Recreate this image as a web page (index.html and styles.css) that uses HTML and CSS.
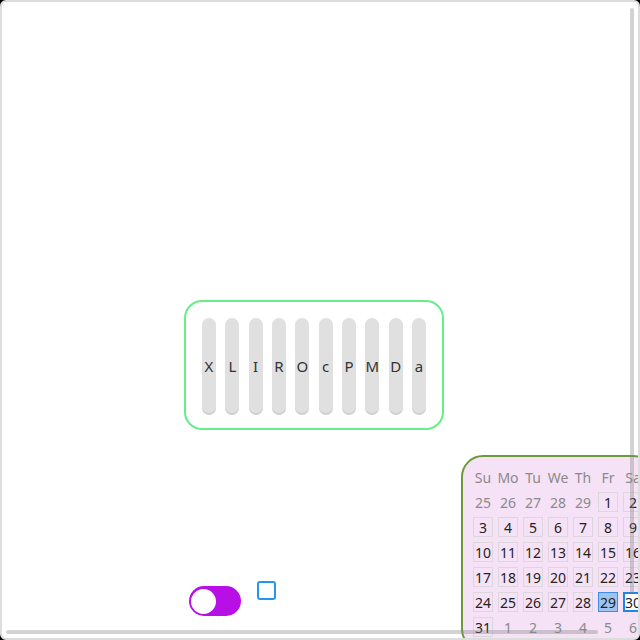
FILE: index.html
```html
<!DOCTYPE html>
<html>
<head>
<meta charset="utf-8">
<link rel="stylesheet" href="styles.css">
</head>
<body>
<div class="frame">
  <div class="canvas">
    <div class="slider-card">
      <div class="pill">X</div>
      <div class="pill">L</div>
      <div class="pill">I</div>
      <div class="pill">R</div>
      <div class="pill">O</div>
      <div class="pill">c</div>
      <div class="pill">P</div>
      <div class="pill">M</div>
      <div class="pill">D</div>
      <div class="pill">a</div>
    </div>
    <div class="bottom-row">
      <div class="toggle"><div class="knob"></div></div>
      <div class="checkbox"></div>
      <div class="calendar">
        <div class="hd">Su</div><div class="hd">Mo</div><div class="hd">Tu</div><div class="hd">We</div><div class="hd">Th</div><div class="hd">Fr</div><div class="hd">Sa</div>
        <div class="d out">25</div><div class="d out">26</div><div class="d out">27</div><div class="d out">28</div><div class="d out">29</div><div class="d in">1</div><div class="d in">2</div>
        <div class="d in">3</div><div class="d in">4</div><div class="d in">5</div><div class="d in">6</div><div class="d in">7</div><div class="d in">8</div><div class="d in">9</div>
        <div class="d in">10</div><div class="d in">11</div><div class="d in">12</div><div class="d in">13</div><div class="d in">14</div><div class="d in">15</div><div class="d in">16</div>
        <div class="d in">17</div><div class="d in">18</div><div class="d in">19</div><div class="d in">20</div><div class="d in">21</div><div class="d in">22</div><div class="d in">23</div>
        <div class="d in">24</div><div class="d in">25</div><div class="d in">26</div><div class="d in">27</div><div class="d in">28</div><div class="d in sel">29</div><div class="d in today">30</div>
        <div class="d in">31</div><div class="d out">1</div><div class="d out">2</div><div class="d out">3</div><div class="d out">4</div><div class="d out">5</div><div class="d out">6</div>
      </div>
    </div>
  </div>
  <div class="vscroll"></div>
  <div class="hscroll"></div>
</div>
</body>
</html>
```
FILE: styles.css
```css
html, body {
  margin: 0;
  padding: 0;
  background: #000;
}
.frame {
  width: 640px;
  height: 640px;
  box-sizing: border-box;
  border: 2px solid #dddddd;
  border-radius: 6px;
  background: #fff;
  overflow: hidden;
  position: relative;
  font-family: "Noto Sans", "DejaVu Sans", sans-serif;
}
.canvas {
  width: 700px;
}
.slider-card {
  margin-left: 182px;
  margin-top: 298px;
  width: 260px;
  height: 130px;
  box-sizing: border-box;
  border: 2px solid #66ee88;
  border-radius: 18px;
  padding: 16px;
  display: flex;
  justify-content: space-between;
}
.pill {
  width: 14px;
  height: 95px;
  border-radius: 7px;
  background: #e0e0e0;
  box-shadow: 0 2px 0 #d0d0d0;
  display: flex;
  align-items: center;
  justify-content: center;
  font-size: 15px;
  color: #333;
}
.bottom-row {
  display: flex;
  align-items: flex-start;
  margin-top: 25px;
}
.toggle {
  margin-left: 187px;
  margin-top: 131px;
  width: 52px;
  height: 30px;
  border-radius: 15px;
  background: #b70fe6;
  box-sizing: border-box;
  padding: 2.5px 2px;
  flex-shrink: 0;
}
.knob {
  width: 25px;
  height: 25px;
  border-radius: 50%;
  background: #fff;
}
.checkbox {
  margin-left: 16px;
  margin-top: 126px;
  width: 19px;
  height: 19px;
  box-sizing: border-box;
  border: 2px solid #2196f3;
  border-radius: 3px;
  background: #fff;
  flex-shrink: 0;
}
.calendar {
  margin-left: 185px;
  flex-shrink: 0;
  border: 2px solid #6d9b3a;
  border-radius: 22px;
  background: #f6e2f6;
  padding: 10px 10px 12px 10px;
  display: grid;
  grid-template-columns: repeat(7, 20px);
  grid-auto-rows: 20px;
  gap: 5px;
  font-size: 14px;
}
.hd, .d {
  display: flex;
  align-items: center;
  justify-content: center;
  white-space: nowrap;
  box-sizing: border-box;
}
.hd {
  color: #8a8a8a;
}
.d.out {
  color: #8a8a8a;
}
.d.in {
  color: #222;
  border: 1px solid #ddd6dd;
}
.d.sel {
  background: #a0c4f0;
  border: 1px solid #3b8ee8;
}
.d.today {
  background: #fff;
  border: 2px solid #1e88e5;
}
.vscroll {
  position: absolute;
  right: 4px;
  top: 6px;
  width: 4px;
  height: 586px;
  border-radius: 2px;
  background: rgba(128, 128, 128, 0.35);
}
.hscroll {
  position: absolute;
  left: 4px;
  bottom: 4px;
  width: 592px;
  height: 4px;
  border-radius: 2px;
  background: rgba(128, 128, 128, 0.35);
}
```
